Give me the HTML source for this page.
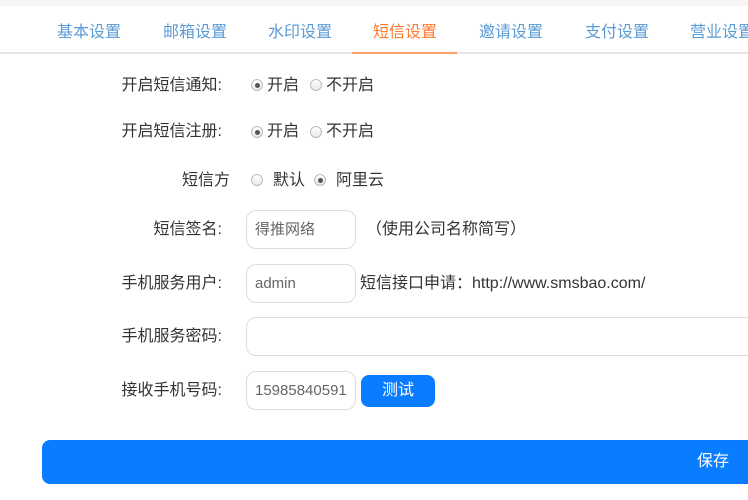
<!DOCTYPE html>
<html><head><meta charset="utf-8"><style>
*{margin:0;padding:0;box-sizing:border-box}
body{width:748px;height:500px;overflow:hidden;background:#fff;font-family:"Liberation Sans","Noto Sans CJK SC",sans-serif;color:#333;position:relative}
.top{position:absolute;left:0;top:0;width:748px;height:6px;background:#f5f5f5}
.tabbar{position:absolute;left:0;top:52px;width:748px;height:2px;background:#e6e6e6}
.tab{position:absolute;top:22px;font-size:16px;color:#5a9bd6;width:106px;text-align:center;line-height:22px}
.tab.on{color:#ff7a2f}
.ul{position:absolute;left:352px;top:52px;width:105px;height:2px;background:#ffa06a}
.lb{position:absolute;right:526px;font-size:16px;line-height:20px;color:#333;white-space:nowrap}
.t{position:absolute;font-size:16px;line-height:20px;white-space:nowrap}
.r{position:absolute;width:12px;height:12px;border-radius:50%;border:1px solid #bbb;background:linear-gradient(#fff,#e8e8e8)}
.r.c::after{content:"";position:absolute;left:2.5px;top:2.5px;width:5px;height:5px;border-radius:50%;background:#555}
.in{position:absolute;left:246px;width:110px;height:39px;border:1px solid #ddd;border-radius:10px;font-size:15px;color:#666;padding-left:8px;line-height:37px}
.btn{position:absolute;left:361px;top:375px;width:74px;height:32px;background:#0a7cff;border-radius:8px;color:#fff;font-size:16px;text-align:center;line-height:32px}
.save{position:absolute;left:42px;top:440px;width:720px;height:44px;background:#0a7cff;border-radius:8px;color:#fff;font-size:16px;line-height:44px}
</style></head><body>
<div class="top"></div>
<div class="tab" style="left:36px">基本设置</div>
<div class="tab" style="left:142px">邮箱设置</div>
<div class="tab" style="left:247px">水印设置</div>
<div class="tab on" style="left:352px">短信设置</div>
<div class="tab" style="left:458px">邀请设置</div>
<div class="tab" style="left:564px">支付设置</div>
<div class="tab" style="left:669px">营业设置</div>
<div class="tabbar"></div><div class="ul"></div>

<div class="lb" style="top:76px">开启短信通知:</div>
<div class="r c" style="left:251px;top:79px"></div><div class="t" style="left:267px;top:76px">开启</div>
<div class="r" style="left:310px;top:79px"></div><div class="t" style="left:326px;top:76px">不开启</div>

<div class="lb" style="top:122px">开启短信注册:</div>
<div class="r c" style="left:251px;top:126px"></div><div class="t" style="left:267px;top:122px">开启</div>
<div class="r" style="left:310px;top:126px"></div><div class="t" style="left:326px;top:122px">不开启</div>

<div class="lb" style="top:171px;right:518px">短信方</div>
<div class="r" style="left:251px;top:174px"></div><div class="t" style="left:273px;top:171px">默认</div>
<div class="r c" style="left:314px;top:174px"></div><div class="t" style="left:336px;top:171px">阿里云</div>

<div class="lb" style="top:220px">短信签名:</div>
<div class="in" style="top:210px">得推网络</div>
<div class="t" style="left:366px;top:220px">（使用公司名称简写）</div>

<div class="lb" style="top:274px">手机服务用户:</div>
<div class="in" style="top:264px">admin</div>
<div class="t" style="left:360px;top:274px">短信接口申请：http://www.smsbao.com/</div>

<div class="lb" style="top:327px">手机服务密码:</div>
<div class="in" style="top:317px;width:520px"></div>

<div class="lb" style="top:381px">接收手机号码:</div>
<div class="in" style="top:371px">15985840591</div>
<div class="btn">测试</div>

<div class="save"><span style="position:absolute;left:655px">保存</span></div>
</body></html>
